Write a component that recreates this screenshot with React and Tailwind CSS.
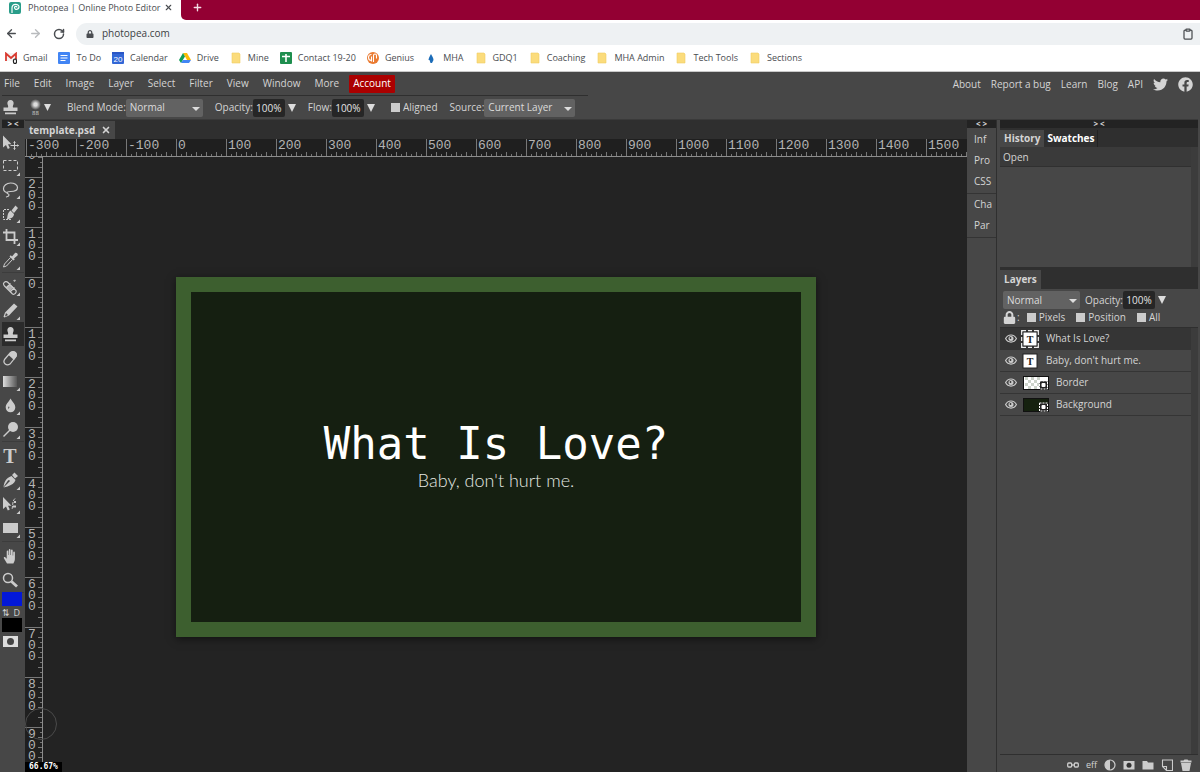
import React, { useState } from 'react'
import { ArrowLeft, ArrowRight, RotateCw, X, Plus, Clipboard } from 'lucide-react'
import { FaTwitter, FaFacebook, FaLock } from 'react-icons/fa'

const menus = ['File', 'Edit', 'Image', 'Layer', 'Select', 'Filter', 'View', 'Window', 'More']
const links = ['About', 'Report a bug', 'Learn', 'Blog', 'API']

const folderIcon = <path d="M2 1h7l1 1v9H2z" fill="#fbdc7c" stroke="#f0cd63" strokeWidth="0.6" />

const bookmarks = [
  {
    name: 'Gmail',
    icon: (
      <>
        <path d="M0 1h12v8H0z" fill="#f4f4f4" />
        <path d="M1 9V1.5l5 4.5 5-4.5V7" fill="none" stroke="#d93a30" strokeWidth="1.8" />
        <ellipse cx="10" cy="9.3" rx="1.6" ry="2.3" fill="#fff" stroke="#222" strokeWidth="1.2" />
      </>
    ),
  },
  {
    name: 'To Do',
    icon: (
      <>
        <rect width="12" height="12" rx="1" fill="#4285f4" />
        <path d="M2.5 3.5h7M2.5 6h7M2.5 8.5h5" stroke="#fff" strokeWidth="1.2" />
      </>
    ),
  },
  {
    name: 'Calendar',
    icon: (
      <>
        <rect width="12" height="12" rx="1" fill="#3367d6" />
        <path d="M0 0h12v2H0z" fill="#2a56c6" />
        <text x="6" y="9.5" fontSize="8" textAnchor="middle" fill="#fff" fontFamily="Liberation Sans">20</text>
      </>
    ),
  },
  {
    name: 'Drive',
    icon: (
      <>
        <path d="M4 1h4l4 7H8z" fill="#fbbc05" />
        <path d="M4 1 0 8l2 3 4-6.5z" fill="#0f9d58" />
        <path d="M4 8h8l-2 3H2z" fill="#4285f4" />
      </>
    ),
  },
  { name: 'Mine', icon: folderIcon },
  {
    name: 'Contact 19-20',
    icon: (
      <>
        <rect width="12" height="12" rx="1" fill="#1e8e4e" />
        <path d="M2 4.5h8M6 2v8" stroke="#fff" strokeWidth="1.6" />
      </>
    ),
  },
  {
    name: 'Genius',
    icon: (
      <>
        <circle cx="6" cy="6" r="6" fill="#ea7a30" />
        <path d="M6.5 10V3.500a1.500 1.500 0 0 1 3 0v3M4.500 2.500a3 3 0 0 0 0 6M4.500 4.500v5" fill="none" stroke="#fff" strokeWidth="1.1" />
      </>
    ),
  },
  { name: 'MHA', icon: <path d="M6 2c1 2 2.5 4 2.5 6L7 11H5.5l-1-3h-1C4 5 5 4 6 2z" fill="#1c6cb8" /> },
  { name: 'GDQ1', icon: folderIcon },
  { name: 'Coaching', icon: folderIcon },
  { name: 'MHA Admin', icon: folderIcon },
  { name: 'Tech Tools', icon: folderIcon },
  { name: 'Sections', icon: folderIcon },
]

const stampShape = (
  <path d="M8.500 4a3.200 3.200 0 0 1 3 4.200c-.7 1.700-.8 2.300-.5 3.300h4.500v3.500h-14v-3.500H6c.3-1 .2-1.600-.5-3.300a3.200 3.200 0 0 1 3-4.200zM3 16.500h11v1.800H3z" />
)

// drawn on a 22x23 grid, the corner mark is added by ToolButton
const toolGroups = [
  {
    height: 'h-[141px]',
    tools: [
      {
        id: 'Move',
        icon: (
          <>
            <path d="M1 4.500v12l3-2.500 1.800 4 2-1-1.800-3.800h3.500z" />
            <path d="M12.500 10.500v8M8.500 14.500h8M11.500 11.500l1-1 1 1M11.500 17.500l1 1 1-1M15.500 13.500l1 1-1 1" fill="none" stroke="#ccc" />
          </>
        ),
      },
      { id: 'Marquee', corner: true, icon: <rect x="1.500" y="5.500" width="14" height="10" fill="none" stroke="#ccc" strokeDasharray="3 2" /> },
      {
        id: 'Lasso',
        corner: true,
        icon: (
          <path d="M5 14.500c-2-.5-3.500-2-3.500-4C1.500 8 4.500 5 8.500 5S15.500 7 15.500 9.500s-3 4-7 4c-2 0-3.500.5-3.500 1.500s2 .5 2 2-1.500 1.500-3 2" fill="none" stroke="#ccc" strokeWidth="1.2" />
        ),
      },
      {
        id: 'Quick select',
        corner: true,
        icon: (
          <>
            <path d="M7 7.500H1.500v10H9" fill="none" stroke="#ccc" strokeDasharray="2 1" />
            <path d="M13.500 3.500l2.500 2.500-4 5-2.500-2.500zM8.500 8.500l3.500 3.500c0 3-3 5-7.500 5.500 1.500-1.500 0-6 4-9z" />
          </>
        ),
      },
      { id: 'Crop', corner: true, icon: <path d="M4.500 4v11H16M1 7.500h11.500V19" fill="none" stroke="#ccc" strokeWidth="1.8" /> },
      {
        id: 'Eyedropper',
        corner: true,
        icon: (
          <>
            <path d="M10 7.500l3-3.500c1.500-1 3.500 1 2.500 2.500l-3.500 3 .8.800-1.300 1.200-4-4 1.300-1.200z" />
            <path d="M8.500 8.500l-6 6.500-1 3 3-1 6-6.500" fill="none" stroke="#ccc" />
          </>
        ),
      },
    ],
  },
  {
    height: 'h-[166px]',
    tools: [
      {
        id: 'Healing brush',
        corner: true,
        icon: (
          <>
            <path d="M1.500 8.500c1-2 3-2.500 4.500-1l8 8c1 2-1.500 4.500-3.500 3.500l-8-8c-.8-.8-1-1.500-1-2.500zM4.500 12.500l4-4M8.500 16.500l4-4" fill="none" stroke="#ccc" strokeWidth="1.200" />
            <path d="M8 9.500l3.500 3-3.500 3.500-3.500-3.500zM11 5.500l1.500 1.500L14 5.500l-1-1z" opacity=".8" />
          </>
        ),
      },
      { id: 'Brush', corner: true, icon: <path d="M12 4.500l3.500 3-8.500 9-4.500 2-1-.8L3 13.500zM3 17.500l3-1.500-2-2z" fillRule="evenodd" /> },
      { id: 'Clone stamp', selected: true, icon: stampShape },
      {
        id: 'Eraser',
        icon: (
          <>
            <path d="M2.500 12.500l6-7c3-2.500 7 .5 5.500 4l-6 7.500c-3.500 2.500-7.500-1-5.500-4.500z" fill="none" stroke="#ccc" strokeWidth="1.200" />
            <path d="M6.500 8l2.500-3c3-2 7 .5 5.500 4.500l-2.500 3.500z" />
          </>
        ),
      },
      {
        id: 'Gradient',
        corner: true,
        icon: (
          <>
            <defs>
              <linearGradient id="toolGradient">
                <stop offset="0" stopColor="#ddd" />
                <stop offset="1" stopColor="#555" />
              </linearGradient>
            </defs>
            <rect x="1" y="6" width="14" height="11" fill="url(#toolGradient)" />
          </>
        ),
      },
      { id: 'Blur', corner: true, icon: <path d="M8.500 4.500c2 3.500 4.800 5.500 4.800 9a4.800 4.800 0 0 1-9.600 0c0-3.500 3-5.500 4.800-9zM6.500 12.500c-.5 1-.3 2 .3 2.500.2-1 .4-1.500.8-2z" fillRule="evenodd" /> },
      {
        id: 'Dodge',
        corner: true,
        icon: (
          <>
            <circle cx="11" cy="9" r="5" />
            <path d="M8 12l-6.500 6.500" stroke="#ccc" strokeWidth="1.500" />
          </>
        ),
      },
    ],
  },
  {
    height: 'h-[97px]',
    tools: [
      { id: 'Type', icon: <text x="8" y="18" fontSize="20" fontWeight="bold" textAnchor="middle" fontFamily="Liberation Serif">T</text> },
      {
        id: 'Pen',
        corner: true,
        icon: (
          <path d="M10 6l2.500-2.500 3.500 3.500L13 9.500zM9.500 7l4 4c-1 3.500-4 5-8 6.500l-4 1 5.500-5.500 1-1-1-1-1 .5L1.500 18c.5-4 2-9 8-11z" />
        ),
      },
      {
        id: 'Path select',
        corner: true,
        icon: (
          <>
            <path d="M1 4v12l3-2.500 1.800 4 2-1-1.800-3.800h3.500z" />
            <path d="M13 5.500c-3 3-2 7-3 11" fill="none" stroke="#ccc" strokeDasharray="3 1" />
            <path d="M12 8h2v2h-2zM11 12.500h3v2h-3z" />
          </>
        ),
      },
      { id: 'Rectangle', corner: true, icon: <rect x="1" y="6" width="15" height="10" /> },
    ],
  },
  {
    height: 'h-[48px]',
    tools: [
      {
        id: 'Hand',
        icon: (
          <path d="M5 18.500L2 13.500c-.8-1 .6-2 1.500-1l1.200 1.200V6.500c0-1.200 1.600-1.200 1.600 0V10h.5V5c0-1.200 1.700-1.200 1.700 0v5H9V5.500c0-1.200 1.700-1.200 1.700 0V10.500h.5V7.500c0-1.200 1.700-1.200 1.700 0V14c0 2-1 3-1.500 4.500z" />
        ),
      },
      {
        id: 'Zoom',
        icon: (
          <>
            <circle cx="6" cy="9" r="4.500" fill="none" stroke="#ccc" strokeWidth="1.500" />
            <path d="M9.500 12.500l5.500 5" stroke="#ccc" strokeWidth="2.800" />
          </>
        ),
      },
    ],
  },
]

const layers = [
  { name: 'What Is Love?', kind: 'text', selected: true },
  { name: "Baby, don't hurt me.", kind: 'text' },
  { name: 'Border', kind: 'shape', checker: true },
  { name: 'Background', kind: 'shape' },
]

const hMarks = [-300, -200, -100, 0, 100, 200, 300, 400, 500, 600, 700, 800, 900, 1000, 1100, 1200, 1300, 1400, 1500]
const vMarks = [-200, -100, 0, 100, 200, 300, 400, 500, 600, 700, 800, 900]
const ticks = [5, 10, 15, 20, 25, 30, 35, 40, 45]

function ToolButton({ tool }) {
  return (
    <button
      aria-label={tool.id}
      className={`flex min-h-0 w-full flex-1 items-center ${tool.selected ? 'bg-[#2b2b2b]' : ''}`}
    >
      <svg viewBox="0 0 22 23" className="h-[23px] w-[22px] shrink-0" fill="#ccc">
        {tool.icon}
        {tool.corner && <path d="M18 17.500v3.500h-3.500z" />}
      </svg>
    </button>
  )
}

function Dropdown({ label, value, width }) {
  return (
    <span className={`relative h-[18px] ${width}`}>
      <select
        aria-label={label}
        className="block h-full w-full appearance-none rounded-[2px] border-0 bg-[#626262] px-1 text-[#dcdcdc]"
      >
        <option>{value}</option>
      </select>
      <svg viewBox="0 0 8 4" className="pointer-events-none absolute top-[8px] right-[3px] h-1 w-2" fill="#ddd">
        <path d="M0 0h8L4 4z" />
      </svg>
    </span>
  )
}

function Percent({ label }) {
  const [value, setValue] = useState('100%')
  return (
    <label className="flex items-center">
      {label}:
      <input
        value={value}
        onChange={e => setValue(e.target.value)}
        className="h-[18px] w-8 rounded-[2px] bg-[#262626] text-center text-[#e4e4e4]"
      />
      <svg viewBox="0 0 8 8" className="ml-[3px] h-2 w-2" fill="#ddd">
        <path d="M0 0h8L4 8z" />
      </svg>
    </label>
  )
}

function Check({ label }) {
  return (
    <label className="flex items-center gap-[3px]">
      <input type="checkbox" className="h-[9px] w-[9px] appearance-none bg-[#ccc] checked:bg-[#6ba4e8]" />
      {label}
    </label>
  )
}

function BrowserBar() {
  return (
    <header className="bg-white text-[#4a4d51]">
      <div className="flex h-5 bg-white">
        <div className="flex w-[181px] items-center pr-2 pb-[5px] pl-[9px] text-[9px]">
          <svg viewBox="0 0 12 12" className="mr-[7px] h-3 w-3">
            <rect width="12" height="12" rx="2" fill="#2a9d8a" />
            <path d="M3 11V6c0-5 7-4.500 7-1.200C10 8 5.500 8 5.500 5.500c0-1.500 2.500-1.500 2.500 0" fill="none" stroke="#fff" strokeWidth="1.200" />
          </svg>
          <span className="flex-1 whitespace-nowrap">Photopea | Online Photo Editor</span>
          <button aria-label="Close tab">
            <X size={9} strokeWidth={3} />
          </button>
        </div>
        <button aria-label="New tab" className="flex flex-1 items-center rounded-bl-[5px] bg-[#930033] pb-[5px] pl-[11px] text-[#f3dce4]">
          <Plus size={11} strokeWidth={3} />
        </button>
      </div>
      <div className="flex h-[27px] items-center gap-[11px] pl-[5px]">
        <button aria-label="Back">
          <ArrowLeft size={13} strokeWidth={2.5} />
        </button>
        <button aria-label="Forward" className="text-[#b9bbbe]">
          <ArrowRight size={13} strokeWidth={2.5} />
        </button>
        <button aria-label="Reload">
          <RotateCw size={12} strokeWidth={3} />
        </button>
        <div className="flex h-[22px] flex-1 items-center rounded-l-full bg-[#eef1f3] pr-[6px] pl-[10px]">
          <FaLock size={8} />
          <input
            aria-label="Address"
            defaultValue="photopea.com"
            className="ml-2 flex-1 bg-transparent text-[10px] text-[#3c4043] outline-none"
          />
          <button aria-label="Copy">
            <Clipboard size={12} strokeWidth={2.5} />
          </button>
        </div>
      </div>
      <nav className="flex h-[25px] items-center gap-[11px] border-b border-[#c9c9c9] pb-[3px] pl-[5px] text-[9px]">
        {bookmarks.map(b => (
          <a key={b.name} href="#" className="flex items-center gap-[6px] whitespace-nowrap">
            <svg viewBox="0 0 12 12" className="h-3 w-3">{b.icon}</svg>
            {b.name}
          </a>
        ))}
      </nav>
    </header>
  )
}

function MenuBar() {
  return (
    <div className="flex h-6 items-center justify-between">
      <nav className="flex h-full w-[586px] items-center gap-[14px] border-b border-[#2f2f2f] pl-[2px]">
        {menus.map(m => (
          <button key={m}>{m}</button>
        ))}
        <button className="-ml-1 h-[18px] rounded-[1px] bg-[#ab0000] px-1 text-white">Account</button>
      </nav>
      <nav className="flex items-center gap-[10px] pr-[5px]">
        {links.map(l => (
          <a key={l} href="#">{l}</a>
        ))}
        <a href="#" aria-label="Twitter"><FaTwitter size={15} /></a>
        <a href="#" aria-label="Facebook"><FaFacebook size={15} /></a>
      </nav>
    </div>
  )
}

function OptionsBar() {
  return (
    <div className="flex h-6 items-center gap-3 border-b border-[#3a3a3a] bg-[#474747]">
      <svg viewBox="0 0 22 23" className="h-[23px] w-[22px]" fill="#ccc">{stampShape}</svg>
      <button aria-label="Brush" className="-ml-[6px] flex items-center gap-[3px]">
        <span className="flex flex-col items-center text-[6px] leading-[6px]">
          <span className="h-[11px] w-[11px] rounded-full bg-[radial-gradient(#ddd_20%,transparent_70%)]" />
          88
        </span>
        <svg viewBox="0 0 7 7" className="h-[7px] w-[7px]" fill="#ddd">
          <path d="M0 0h7L3.500 7z" />
        </svg>
      </button>
      <span className="ml-1 flex items-center">
        Blend Mode:
        <Dropdown label="Blend Mode" value="Normal" width="w-[77px]" />
      </span>
      <Percent label="Opacity" />
      <Percent label="Flow" />
      <span className="ml-1"><Check label="Aligned" /></span>
      <span className="flex items-center">
        Source:
        <Dropdown label="Source" value="Current Layer" width="w-[91px]" />
      </span>
    </div>
  )
}

function Toolbar() {
  return (
    <aside className="flex w-[22px] shrink-0 flex-col bg-[#474747]">
      <button className="h-[8px] bg-[#232323] text-[8px] leading-[8px] font-bold">&gt; &lt;</button>
      <div className="flex flex-col gap-[3px] pt-[3px]">
        {toolGroups.map(g => (
          <div key={g.tools[0].id} className={`flex flex-col shadow-[0_1px_0_#3c3c3c] ${g.height}`}>
            {g.tools.map(t => <ToolButton key={t.id} tool={t} />)}
          </div>
        ))}
      </div>
      <button aria-label="Foreground colour" className="h-[14px] w-[20px] shrink-0 bg-[#0318d8]" />
      <div className="flex h-[12px] w-[20px] shrink-0 items-center justify-between pr-[2px] text-[9px] leading-none">
        <button>&#8645;</button>
        <button>D</button>
      </div>
      <button aria-label="Background colour" className="h-[14px] w-[20px] shrink-0 bg-black" />
      <button aria-label="Quick mask" className="mt-1">
        <svg viewBox="0 0 22 11" className="h-[11px] w-[22px]">
          <path d="M1 0h15v11H1z" fill="#ddd" />
          <circle cx="8.500" cy="5.500" r="3.500" fill="#444" />
        </svg>
      </button>
    </aside>
  )
}

function HorizontalRuler() {
  return (
    <div className="flex h-[18px] overflow-hidden border-b border-[#8c8c8c] bg-[#1f1f1f] pl-px">
      {hMarks.map(m => (
        <div key={m} className="relative w-[50px] shrink-0 border-l border-[#777] pl-px leading-[14px]">
          {m}
          <svg viewBox="0 0 50 5" className="absolute bottom-0 left-[-1px] h-[5px] w-[50px]" stroke="#777">
            {ticks.map((x, i) => <path key={x} d={`M${x}.5 ${i % 2 ? 1 : 3}V5`} />)}
          </svg>
        </div>
      ))}
    </div>
  )
}

function VerticalTicks() {
  return (
    <svg viewBox="0 0 5 50" className="absolute right-0 bottom-0 h-[50px] w-[5px]" stroke="#777">
      {ticks.map((y, i) => <path key={y} d={`M${i % 2 ? 1 : 3} ${y}.5H5`} />)}
    </svg>
  )
}

function VerticalRuler() {
  return (
    <div className="w-[18px] shrink-0 overflow-hidden border-r border-[#8c8c8c] bg-[#1f1f1f]">
      <div className="relative flex h-5 flex-col overflow-hidden pl-[3px] leading-[11px]">
        <span className="-mt-[7px]">0</span>
        <VerticalTicks />
      </div>
      {vMarks.map(m => (
        <div key={m} className="relative flex h-[50px] flex-col border-t border-[#777] pt-px pl-[3px] leading-[11px]">
          {String(Math.abs(m)).split('').map((c, i) => <span key={i}>{c}</span>)}
          <VerticalTicks />
        </div>
      ))}
    </div>
  )
}

function Workspace() {
  return (
    <main className="relative ml-px flex min-w-0 flex-1 flex-col overflow-hidden bg-[#232323]">
      <div className="flex h-[19px] bg-[#2f2f2f]">
        <div className="mt-px flex items-center gap-[6px] bg-[#474747] px-1 font-bold">
          template.psd
          <button aria-label="Close document"><X size={10} strokeWidth={4} /></button>
        </div>
      </div>
      <div className="flex min-h-0 flex-1 flex-col font-['Liberation_Mono',monospace] text-[13px] text-[#b4b4b4]">
        <HorizontalRuler />
        <div className="flex min-h-0 flex-1">
          <VerticalRuler />
          <div className="pt-[120px] pl-[133px]">
            <div className="flex h-[360px] w-[640px] flex-col items-center border-[15px] border-[#3d5f2f] bg-[#151f11] pt-[127px] shadow-[0_2px_8px_rgba(0,0,0,0.5)]">
              <h1 className="font-['DejaVu_Sans_Mono',monospace] text-[44px] leading-[50px] whitespace-pre text-white">What Is Love?</h1>
              <p className="font-['Lato',sans-serif] text-[18px] leading-[22px] font-light text-[#e4e8e2]">Baby, don&apos;t hurt me.</p>
            </div>
          </div>
        </div>
      </div>
      <span className="absolute bottom-[32px] left-0 h-8 w-8 rounded-full border border-[#4a4a4a]" />
      <span className="absolute bottom-0 left-0 bg-black px-[4px] font-['DejaVu_Sans_Mono',monospace] text-[8px] leading-[10px] font-bold text-white">
        66.67%
      </span>
    </main>
  )
}

function MiniPanels() {
  return (
    <aside className="flex w-[30px] shrink-0 flex-col border-r border-[#2f2f2f] bg-[#474747]">
      <button className="h-[8px] bg-[#232323] text-[8px] leading-[8px] font-bold">&lt; &gt;</button>
      <div className="flex flex-col border-b border-[#343434] py-px pl-[7px]">
        {['Inf', 'Pro', 'CSS'].map(p => <button key={p} className="h-[21px] text-left">{p}</button>)}
      </div>
      <div className="flex flex-col border-b border-[#343434] pb-px pl-[7px]">
        {['Cha', 'Par'].map(p => <button key={p} className="h-[21px] text-left">{p}</button>)}
      </div>
    </aside>
  )
}

function LayerThumb({ layer }) {
  if (layer.kind === 'text') {
    return (
      <svg viewBox="0 0 18 18" className="ml-1 h-[18px] w-[18px]">
        {layer.selected && (
          <path d="M.8 5V.8H5M7 .8h4M13 .8h4.200V5M17.200 7v4M17.200 13v4.200H13M11 17.200H7M5 17.200H.8V13M.8 11V7" fill="none" stroke="#eee" strokeWidth="1.500" />
        )}
        <rect x="2" y="2" width="14" height="14" fill="#fff" stroke="#222" />
        <text x="9" y="12.500" fontSize="10" fontWeight="bold" textAnchor="middle" fontFamily="Liberation Serif" fill="#222">T</text>
      </svg>
    )
  }
  return (
    <svg viewBox="0 0 26 16" className="ml-[6px] h-4 w-[26px]">
      <rect x=".5" y="1.500" width="25" height="13" fill={layer.checker ? '#fff' : '#15210f'} stroke="#111" />
      {layer.checker && (
        <path d="M2 3.500h16M5 6.500h12M2 9.500h14M5 12.500h11" stroke="#ccd3ca" strokeWidth="3" strokeDasharray="3 3" />
      )}
      <rect x="16.500" y="6" width="8" height="8" fill="#222" stroke="#fff" strokeDasharray="2 1" />
      <rect x="18.500" y="8" width="4" height="4" rx="1" fill="#fff" />
    </svg>
  )
}

function LayersPanel() {
  return (
    <section className="flex min-h-0 flex-1 flex-col">
      <div className="flex h-[19px] bg-[#2f2f2f]">
        <h2 className="bg-[#474747] px-1 leading-[18px] font-bold">Layers</h2>
      </div>
      <div className="flex h-5 items-center gap-[5px] pt-[2px] pl-[3px]">
        <Dropdown label="Layer blend mode" value="Normal" width="w-[77px]" />
        <Percent label="Opacity" />
      </div>
      <div className="flex h-[18px] items-center gap-[11px] pb-[2px] pl-[3px]">
        <span className="-mr-[4px] flex items-center gap-px">
          <FaLock size={13} />:
        </span>
        <Check label="Pixels" />
        <Check label="Position" />
        <Check label="All" />
      </div>
      <div className="flex min-h-0 flex-1 border-t border-[#2f2f2f]">
        <ul className="flex-1">
          {layers.map(l => (
            <li
              key={l.name}
              className={`flex h-[22px] items-center border-b border-[#353535] pl-[5px] ${l.selected ? 'bg-[#353535]' : ''}`}
            >
              <button aria-label="Toggle visibility">
                <svg viewBox="0 0 12 9" className="h-[9px] w-3">
                  <path d="M.6 4.500C3-.2 9-.2 11.400 4.500 9 9.200 3 9.200.6 4.500z" fill="none" stroke="#ccc" strokeWidth="1.200" />
                  <circle cx="6" cy="4.500" r="2.500" fill="#ccc" />
                  <circle cx="5.500" cy="4" r=".9" fill="#333" />
                </svg>
              </button>
              <LayerThumb layer={l} />
              <span className="ml-[7px]">{l.name}</span>
            </li>
          ))}
        </ul>
        <div className="w-[7px] bg-[#3c3c3c]" />
      </div>
      <div className="flex h-[18px] items-center justify-end gap-[7px] border-t border-[#2f2f2f] pt-[3px] pr-[6px]">
        <button aria-label="Link layers">
          <svg viewBox="0 0 12 12" className="h-3 w-3" fill="none" stroke="#ccc" strokeWidth="1.300">
            <rect x=".7" y="4" width="4" height="4" rx="1" />
            <rect x="7.300" y="4" width="4" height="4" rx="1" />
            <path d="M4 6h4" />
          </svg>
        </button>
        <button className="text-[9px] leading-3">eff</button>
        <button aria-label="Adjustment layer">
          <svg viewBox="0 0 12 12" className="h-3 w-3">
            <circle cx="6" cy="6" r="5" fill="none" stroke="#ccc" strokeWidth="1.200" />
            <path d="M6 1a5 5 0 0 0 0 10z" fill="#ccc" />
          </svg>
        </button>
        <button aria-label="Raster mask">
          <svg viewBox="0 0 12 12" className="h-3 w-3">
            <path d="M.5 2h11v8.500H.5z" fill="#ccc" />
            <circle cx="6" cy="6.200" r="2.500" fill="#333" />
          </svg>
        </button>
        <button aria-label="New folder">
          <svg viewBox="0 0 12 12" className="h-3 w-3" fill="#ccc"><path d="M.5 2h4.500l1 1.500h5.500v7H.5z" /></svg>
        </button>
        <button aria-label="New layer">
          <svg viewBox="0 0 12 12" className="h-3 w-3" fill="none" stroke="#ccc" strokeWidth="1.100">
            <path d="M1 1h10.500v10.500H5.500L1.500 7.500V1M5.500 11.500v-4h-4" />
          </svg>
        </button>
        <button aria-label="Delete layer">
          <svg viewBox="0 0 12 12" className="h-3 w-3" fill="#ccc"><path d="M.5 1.500h3l1-1h3l1 1h3v2H.5zM1 4h10l-1.500 8h-7z" /></svg>
        </button>
      </div>
    </section>
  )
}

function SidePanels() {
  return (
    <aside className="ml-[3px] flex w-[198px] shrink-0 flex-col bg-[#474747]">
      <button className="h-[8px] shrink-0 bg-[#232323] text-[8px] leading-[8px] font-bold">&gt; &lt;</button>
      <section className="flex h-[142px] shrink-0 flex-col border-b-[3px] border-[#2f2f2f]">
        <div className="flex h-[19px] shrink-0 bg-[#2f2f2f] pt-[2px] font-bold">
          <button className="bg-[#474747] px-1">History</button>
          <button className="border-r border-[#222] px-[3px] text-white">Swatches</button>
        </div>
        <div className="flex min-h-0 flex-1">
          <div className="flex-1">
            <div className="h-5 border-b border-[#303030] bg-[#3a3a3a] pl-[3px] leading-[20px]">Open</div>
          </div>
          <div className="w-[7px] bg-[#3c3c3c]" />
        </div>
      </section>
      <LayersPanel />
    </aside>
  )
}

export default function App() {
  return (
    <div className="flex h-screen flex-col bg-[#3d3d3d] font-['Open_Sans','Noto_Sans',sans-serif] text-[10px] leading-[15px]">
      <BrowserBar />
      <div className="flex min-h-0 flex-1 flex-col bg-[#474747] px-[2px] text-[#d4d4d4]">
        <MenuBar />
        <OptionsBar />
        <div className="flex min-h-0 flex-1">
          <Toolbar />
          <Workspace />
          <MiniPanels />
          <SidePanels />
        </div>
      </div>
    </div>
  )
}
